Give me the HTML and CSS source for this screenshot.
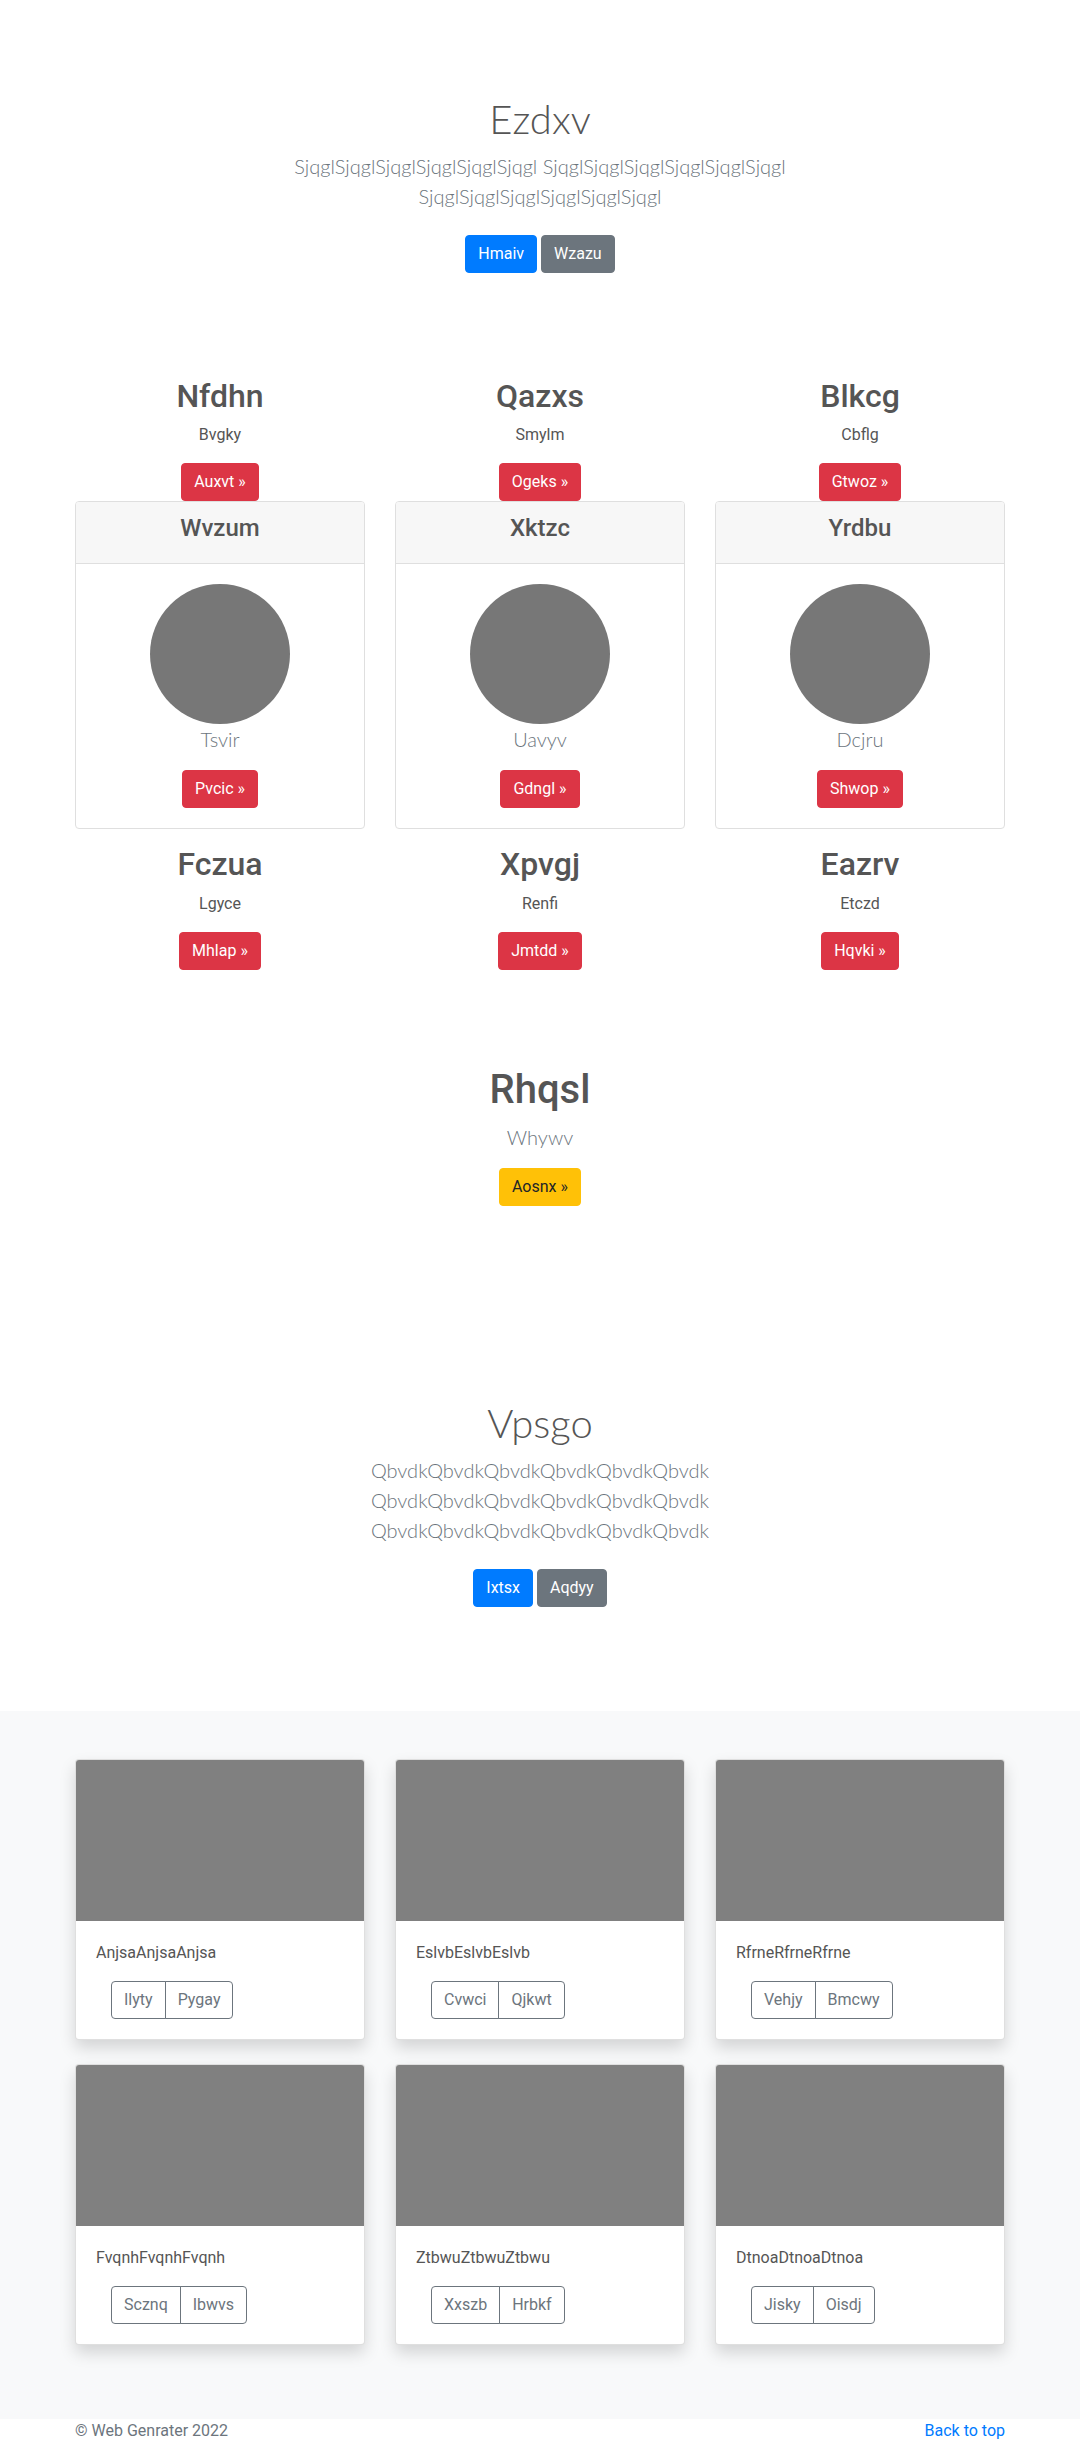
FILE: index.html
```html
<!DOCTYPE html>
<html lang="en">
<head>
<meta charset="utf-8">
<title>Ezdxv</title>
<link rel="stylesheet" href="styles.css">
</head>
<body>
<main>
  <section class="hero">
    <div class="hero-inner">
      <h1 class="hero-title">Ezdxv</h1>
      <p class="lead">SjqglSjqglSjqglSjqglSjqglSjqgl SjqglSjqglSjqglSjqglSjqglSjqgl SjqglSjqglSjqglSjqglSjqglSjqgl</p>
      <p class="hero-actions"><a href="#" class="btn btn-primary">Hmaiv</a> <a href="#" class="btn btn-secondary">Wzazu</a></p>
    </div>
  </section>

  <section class="features">
    <div class="container feature-grid">
      <div class="feature">
        <h2 class="feature-title">Nfdhn</h2>
        <p class="feature-text">Bvgky</p>
        <div class="feature-action"><a href="#" class="btn btn-danger">Auxvt &raquo;</a></div>
        <div class="panel">
          <div class="panel-header"><h4 class="panel-title">Wvzum</h4></div>
          <div class="panel-body">
            <svg class="avatar" width="140" height="140" viewBox="0 0 140 140"><circle cx="70" cy="70" r="70" fill="#777777"/></svg>
            <p class="lead panel-lead">Tsvir</p>
            <a href="#" class="btn btn-danger">Pvcic &raquo;</a>
          </div>
        </div>
      </div>
      <div class="feature">
        <h2 class="feature-title">Qazxs</h2>
        <p class="feature-text">Smylm</p>
        <div class="feature-action"><a href="#" class="btn btn-danger">Ogeks &raquo;</a></div>
        <div class="panel">
          <div class="panel-header"><h4 class="panel-title">Xktzc</h4></div>
          <div class="panel-body">
            <svg class="avatar" width="140" height="140" viewBox="0 0 140 140"><circle cx="70" cy="70" r="70" fill="#777777"/></svg>
            <p class="lead panel-lead">Uavyv</p>
            <a href="#" class="btn btn-danger">Gdngl &raquo;</a>
          </div>
        </div>
      </div>
      <div class="feature">
        <h2 class="feature-title">Blkcg</h2>
        <p class="feature-text">Cbflg</p>
        <div class="feature-action"><a href="#" class="btn btn-danger">Gtwoz &raquo;</a></div>
        <div class="panel">
          <div class="panel-header"><h4 class="panel-title">Yrdbu</h4></div>
          <div class="panel-body">
            <svg class="avatar" width="140" height="140" viewBox="0 0 140 140"><circle cx="70" cy="70" r="70" fill="#777777"/></svg>
            <p class="lead panel-lead">Dcjru</p>
            <a href="#" class="btn btn-danger">Shwop &raquo;</a>
          </div>
        </div>
      </div>
      <div class="feature">
        <h2 class="feature-title">Fczua</h2>
        <p class="feature-text">Lgyce</p>
        <div class="feature-action"><a href="#" class="btn btn-danger">Mhlap &raquo;</a></div>
      </div>
      <div class="feature">
        <h2 class="feature-title">Xpvgj</h2>
        <p class="feature-text">Renfi</p>
        <div class="feature-action"><a href="#" class="btn btn-danger">Jmtdd &raquo;</a></div>
      </div>
      <div class="feature">
        <h2 class="feature-title">Eazrv</h2>
        <p class="feature-text">Etczd</p>
        <div class="feature-action"><a href="#" class="btn btn-danger">Hqvki &raquo;</a></div>
      </div>
    </div>
  </section>

  <section class="cta">
    <h1 class="cta-title">Rhqsl</h1>
    <p class="lead">Whywv</p>
    <div class="cta-action"><a href="#" class="btn btn-warning">Aosnx &raquo;</a></div>
  </section>

  <section class="hero hero-last">
    <div class="hero-inner">
      <h1 class="hero-title">Vpsgo</h1>
      <p class="lead">QbvdkQbvdkQbvdkQbvdkQbvdkQbvdk QbvdkQbvdkQbvdkQbvdkQbvdkQbvdk QbvdkQbvdkQbvdkQbvdkQbvdkQbvdk</p>
      <p class="hero-actions"><a href="#" class="btn btn-primary">Ixtsx</a> <a href="#" class="btn btn-secondary">Aqdyy</a></p>
    </div>
  </section>

  <section class="album">
    <div class="container album-grid">
      <div class="album-card">
        <div class="album-thumb"></div>
        <div class="album-body">
          <p class="album-text">AnjsaAnjsaAnjsa</p>
          <div class="btn-group"><a href="#" class="btn btn-outline">Ilyty</a><a href="#" class="btn btn-outline">Pygay</a></div>
        </div>
      </div>
      <div class="album-card">
        <div class="album-thumb"></div>
        <div class="album-body">
          <p class="album-text">EslvbEslvbEslvb</p>
          <div class="btn-group"><a href="#" class="btn btn-outline">Cvwci</a><a href="#" class="btn btn-outline">Qjkwt</a></div>
        </div>
      </div>
      <div class="album-card">
        <div class="album-thumb"></div>
        <div class="album-body">
          <p class="album-text">RfrneRfrneRfrne</p>
          <div class="btn-group"><a href="#" class="btn btn-outline">Vehjy</a><a href="#" class="btn btn-outline">Bmcwy</a></div>
        </div>
      </div>
      <div class="album-card">
        <div class="album-thumb"></div>
        <div class="album-body">
          <p class="album-text">FvqnhFvqnhFvqnh</p>
          <div class="btn-group"><a href="#" class="btn btn-outline">Scznq</a><a href="#" class="btn btn-outline">Ibwvs</a></div>
        </div>
      </div>
      <div class="album-card">
        <div class="album-thumb"></div>
        <div class="album-body">
          <p class="album-text">ZtbwuZtbwuZtbwu</p>
          <div class="btn-group"><a href="#" class="btn btn-outline">Xxszb</a><a href="#" class="btn btn-outline">Hrbkf</a></div>
        </div>
      </div>
      <div class="album-card">
        <div class="album-thumb"></div>
        <div class="album-body">
          <p class="album-text">DtnoaDtnoaDtnoa</p>
          <div class="btn-group"><a href="#" class="btn btn-outline">Jisky</a><a href="#" class="btn btn-outline">Oisdj</a></div>
        </div>
      </div>
    </div>
  </section>
</main>

<footer class="site-footer">
  <div class="container footer-row">
    <p class="footer-copy">&copy; Web Genrater 2022</p>
    <a href="#" class="footer-link">Back to top</a>
  </div>
</footer>
</body>
</html>
```

FILE: styles.css
```css
* { box-sizing: border-box; }

html, body {
  margin: 0;
  padding: 0;
}

body {
  font-family: Roboto, "Noto Sans", "Liberation Sans", sans-serif;
  font-size: 16px;
  line-height: 1.5;
  color: #555555;
  background: #ffffff;
}

a { text-decoration: none; }

.container {
  width: 930px;
  margin: 0 auto;
}

/* Buttons */
.btn {
  display: inline-block;
  font-size: 16px;
  font-weight: 400;
  line-height: 24px;
  padding: 6px 12px;
  border: 1px solid transparent;
  border-radius: 4px;
  text-align: center;
  vertical-align: middle;
  white-space: nowrap;
}
.btn-primary { background: #007bff; border-color: #007bff; color: #fff; }
.btn-secondary { background: #6c757d; border-color: #6c757d; color: #fff; }
.btn-danger { background: #dc3545; border-color: #dc3545; color: #fff; }
.btn-warning { background: #ffc107; border-color: #ffc107; color: #212529; }
.btn-outline {
  background: transparent;
  border-color: #6c757d;
  color: #6c757d;
}

/* Hero */
.hero {
  text-align: center;
  padding: 95px 15px 48px;
}
.hero-last {
  padding-bottom: 96px;
}
.hero-inner {
  max-width: 610px;
  margin: 0 auto;
}
.hero-title {
  font-family: Lato, Roboto, sans-serif;
  font-size: 40px;
  font-weight: 300;
  line-height: 1.2;
  margin: 0 0 8px;
  color: #555555;
}
.lead {
  font-family: Lato, Roboto, sans-serif;
  font-size: 20px;
  font-weight: 300;
  line-height: 30px;
  margin: 0 0 16px;
  color: #6c757d;
}
.hero-actions {
  margin: 0;
}
.hero-actions .btn {
  margin: 8px 0;
}

/* Features */
.features {
  padding: 48px 0;
}
.feature-grid {
  display: grid;
  grid-template-columns: repeat(3, 1fr);
  column-gap: 30px;
  row-gap: 0;
}
.feature {
  text-align: center;
}
.feature-title {
  font-size: 32px;
  font-weight: 500;
  line-height: 1.2;
  margin: 0 0 8px;
  color: #555555;
}
.feature-text {
  margin: 0 0 16px;
}
.feature-action {
  height: 38px;
}
.panel {
  border: 1px solid #dfdfdf;
  border-radius: 4px;
  margin-bottom: 16px;
  text-align: center;
  overflow: hidden;
}
.panel-header {
  background: #f7f7f7;
  border-bottom: 1px solid #dfdfdf;
  padding: 12px 20px;
}
.panel-title {
  font-size: 24px;
  font-weight: 500;
  line-height: 1.2;
  margin: 0 0 8px;
  color: #555555;
}
.panel-body {
  padding: 20px;
}
.avatar {
  display: block;
  margin: 0 auto;
}
.panel-lead {
  margin-bottom: 16px;
}

/* CTA */
.cta {
  text-align: center;
  padding: 48px 15px 98px;
}
.cta-title {
  font-size: 40px;
  font-weight: 500;
  line-height: 1.2;
  margin: 0 0 8px;
  color: #555555;
}
.cta-action {
  height: 38px;
}

/* Album */
.album {
  background: #f8f9fa;
  padding: 48px 0 74px;
}
.album-grid {
  display: grid;
  grid-template-columns: repeat(3, 1fr);
  column-gap: 30px;
  row-gap: 24px;
}
.album-card {
  background: #fff;
  border: 1px solid rgba(0, 0, 0, 0.125);
  border-radius: 4px;
  box-shadow: 0 8px 16px rgba(0, 0, 0, 0.15);
  overflow: hidden;
}
.album-thumb {
  height: 161px;
  background: #808080;
}
.album-body {
  padding: 20px;
}
.album-text {
  margin: 0 0 16px;
}
.btn-group {
  display: inline-flex;
  margin-left: 15px;
}
.btn-group .btn + .btn {
  margin-left: -1px;
}
.btn-group .btn:first-child {
  border-top-right-radius: 0;
  border-bottom-right-radius: 0;
}
.btn-group .btn:last-child {
  border-top-left-radius: 0;
  border-bottom-left-radius: 0;
}

/* Footer */
.site-footer {
  color: #6c757d;
  padding-bottom: 48px;
}
.footer-row {
  display: flex;
  justify-content: space-between;
  align-items: flex-start;
}
.footer-copy {
  margin: 0;
}
.footer-link {
  color: #007bff;
}
```
